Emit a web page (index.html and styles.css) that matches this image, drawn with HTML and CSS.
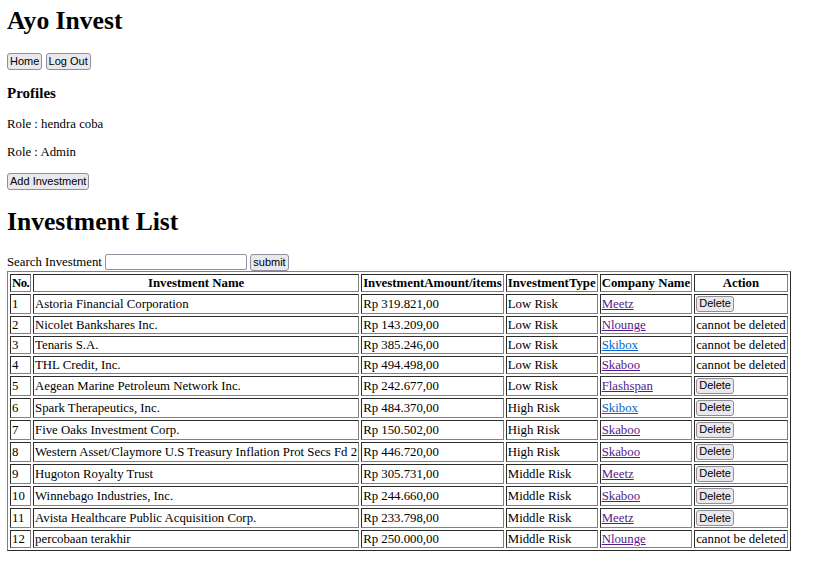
FILE: index.html
```html
<!DOCTYPE html>
<html>
<head>
<meta charset="utf-8">
<title>Ayo Invest</title>
<link rel="stylesheet" href="styles.css">
</head>
<body class="page">
<h1 class="title top">Ayo Invest</h1>
<div class="nav"><button class="btn">Home</button> <button class="btn">Log Out</button></div>
<h3 class="sub">Profiles</h3>
<p class="line">Role : hendra coba</p>
<p class="line">Role : Admin</p>
<div class="nav"><button class="btn">Add Investment</button></div>
<h1 class="title">Investment List</h1>
<form class="search">Search Investment <input class="field" type="text"> <button class="btn" type="button">submit</button></form>
<table class="grid" border="1">
<tr><th class="no">No.</th><th>Investment Name</th><th>InvestmentAmount/items</th><th>InvestmentType</th><th>Company Name</th><th>Action</th></tr>
<tr><td>1</td><td>Astoria Financial Corporation</td><td>Rp 319.821,00</td><td>Low Risk</td><td><a class="lnk v" href="#">Meetz</a></td><td><button class="btn sm">Delete</button></td></tr>
<tr><td>2</td><td>Nicolet Bankshares Inc.</td><td>Rp 143.209,00</td><td>Low Risk</td><td><a class="lnk v" href="#">Nlounge</a></td><td>cannot be deleted</td></tr>
<tr><td>3</td><td>Tenaris S.A.</td><td>Rp 385.246,00</td><td>Low Risk</td><td><a class="lnk" href="#">Skibox</a></td><td>cannot be deleted</td></tr>
<tr><td>4</td><td>THL Credit, Inc.</td><td>Rp 494.498,00</td><td>Low Risk</td><td><a class="lnk v" href="#">Skaboo</a></td><td>cannot be deleted</td></tr>
<tr><td>5</td><td>Aegean Marine Petroleum Network Inc.</td><td>Rp 242.677,00</td><td>Low Risk</td><td><a class="lnk v" href="#">Flashspan</a></td><td><button class="btn sm">Delete</button></td></tr>
<tr><td>6</td><td>Spark Therapeutics, Inc.</td><td>Rp 484.370,00</td><td>High Risk</td><td><a class="lnk" href="#">Skibox</a></td><td><button class="btn sm">Delete</button></td></tr>
<tr><td>7</td><td>Five Oaks Investment Corp.</td><td>Rp 150.502,00</td><td>High Risk</td><td><a class="lnk v" href="#">Skaboo</a></td><td><button class="btn sm">Delete</button></td></tr>
<tr><td>8</td><td>Western Asset/Claymore U.S Treasury Inflation Prot Secs Fd 2</td><td>Rp 446.720,00</td><td>High Risk</td><td><a class="lnk v" href="#">Skaboo</a></td><td><button class="btn sm">Delete</button></td></tr>
<tr><td>9</td><td>Hugoton Royalty Trust</td><td>Rp 305.731,00</td><td>Middle Risk</td><td><a class="lnk v" href="#">Meetz</a></td><td><button class="btn sm">Delete</button></td></tr>
<tr><td>10</td><td>Winnebago Industries, Inc.</td><td>Rp 244.660,00</td><td>Middle Risk</td><td><a class="lnk v" href="#">Skaboo</a></td><td><button class="btn sm">Delete</button></td></tr>
<tr><td>11</td><td>Avista Healthcare Public Acquisition Corp.</td><td>Rp 233.798,00</td><td>Middle Risk</td><td><a class="lnk v" href="#">Meetz</a></td><td><button class="btn sm">Delete</button></td></tr>
<tr><td>12</td><td>percobaan terakhir</td><td>Rp 250.000,00</td><td>Middle Risk</td><td><a class="lnk v" href="#">Nlounge</a></td><td>cannot be deleted</td></tr>
</table>
</body>
</html>
```
FILE: styles.css
```css
.page {
  margin: 6px 7px;
  font-family: "Liberation Serif", "Times New Roman", serif;
  font-size: 12.8px;
  color: #000;
  background: #fff;
}
.title {
  font-size: 25.6px;
  font-weight: bold;
  margin: 17px 0;
}
.title.top {
  margin-top: 0;
}
.sub {
  font-size: 15px;
  margin: 15px 0;
}
.line {
  margin: 12.8px 0;
}
.nav {
  margin: 0;
}
.btn {
  font-family: "Liberation Sans", Arial, sans-serif;
  font-size: 11px;
  height: 17px;
  padding: 0 2px;
  margin: 0;
  border: 1px solid #8f8f9d;
  border-radius: 3px;
  background: #e9e9ed;
  color: #000;
  line-height: 13px;
}
.btn.sm {
  height: 16px;
  vertical-align: middle;
}
.search {
  margin: 0;
}
.field {
  font-family: "Liberation Sans", Arial, sans-serif;
  font-size: 10.7px;
  width: 136px;
  height: 12px;
  padding: 1px 2px;
  border: 1px solid #8f8f9d;
  border-radius: 2px;
  margin: 0;
}
.grid {
  border-spacing: 2px;
  border-color: #808080;
  line-height: 14px;
}
.grid th, .grid td {
  padding: 1px;
  text-align: left;
}
.grid th {
  text-align: center;
}
.grid .no {
  letter-spacing: -0.6px;
}
.lnk {
  color: #0066cc;
}
.lnk.v {
  color: #551a8b;
}
```
